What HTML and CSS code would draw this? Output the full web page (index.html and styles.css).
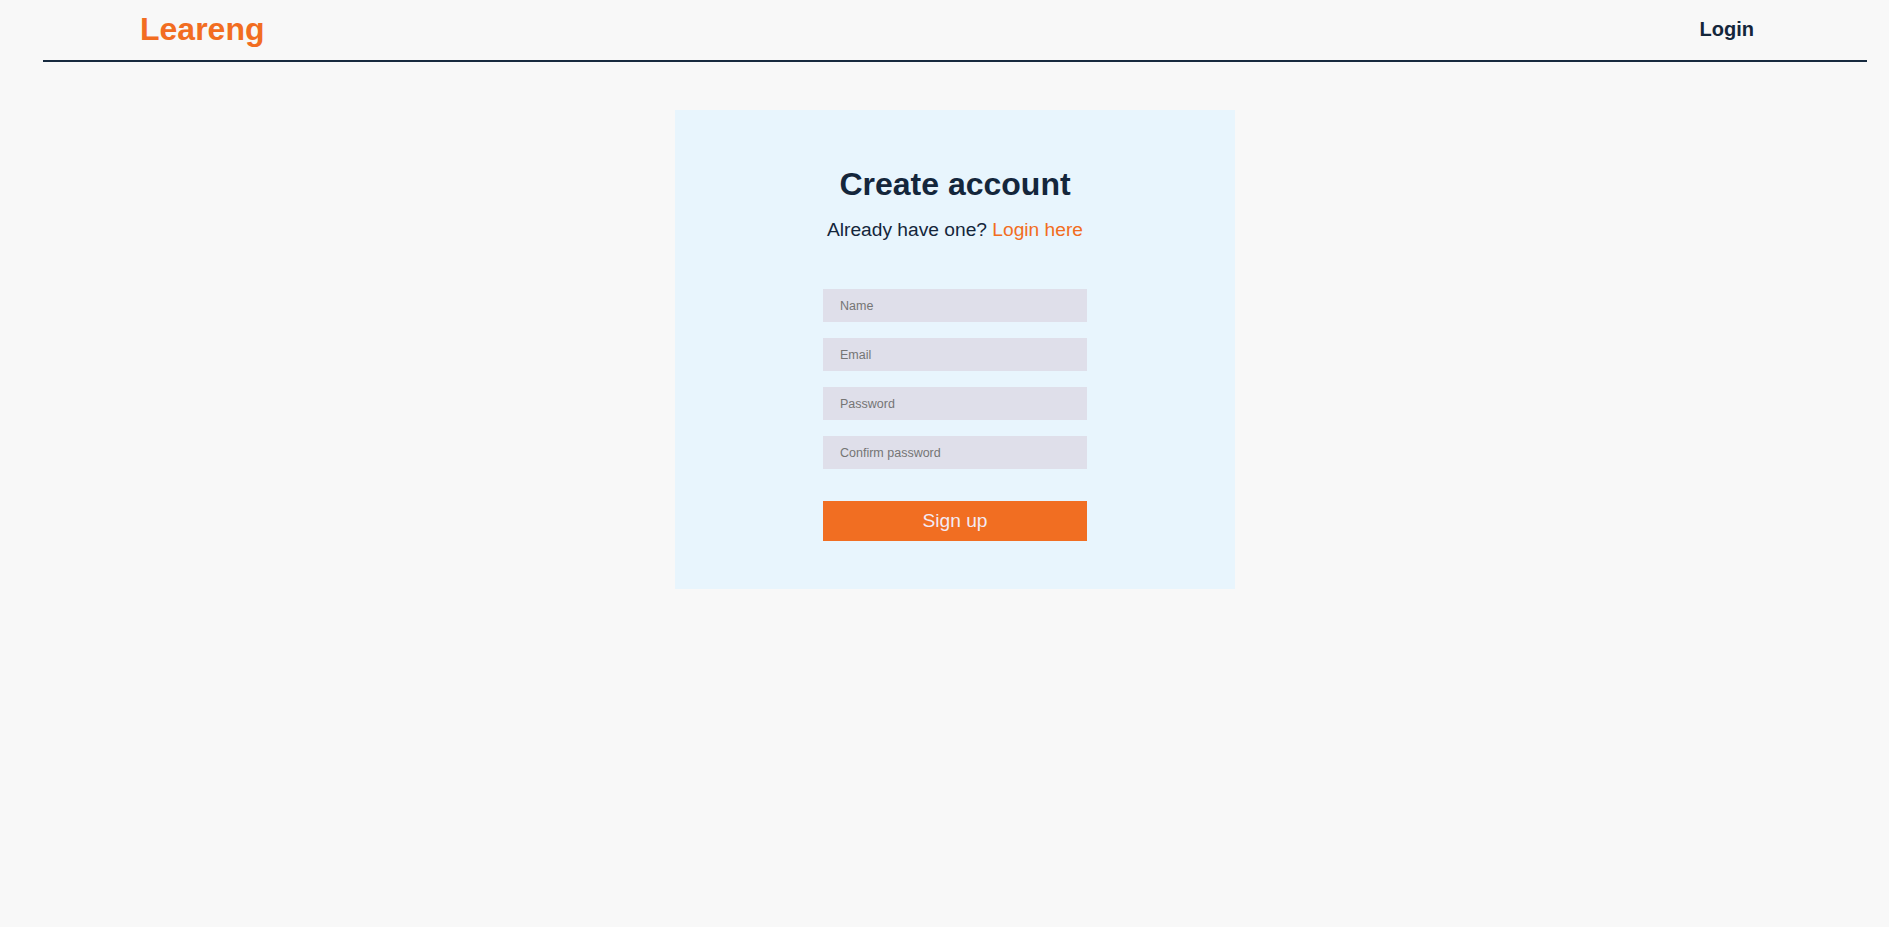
FILE: index.html
```html
<!DOCTYPE html>
<html lang="en">
<head>
<meta charset="utf-8">
<title>Leareng - Create account</title>
<link rel="stylesheet" href="styles.css">
</head>
<body>
<div class="page">
  <header class="topbar">
    <a class="logo" href="#">Leareng</a>
    <a class="nav-login" href="#">Login</a>
  </header>
  <main class="main">
    <section class="card">
      <h1 class="title">Create account</h1>
      <p class="subtitle">Already have one? <a href="#" class="link">Login here</a></p>
      <form class="form">
        <input class="field" type="text" placeholder="Name">
        <input class="field" type="email" placeholder="Email">
        <input class="field" type="password" placeholder="Password">
        <input class="field" type="password" placeholder="Confirm password">
        <button class="btn" type="button">Sign up</button>
      </form>
    </section>
  </main>
</div>
</body>
</html>
```
FILE: styles.css
```css
html, body {
  margin: 0;
  padding: 0;
  background: #f8f8f8;
  font-family: "Liberation Sans", Arial, sans-serif;
  color: #14263b;
}

.page {
  margin: 0 22px 0 43px;
}

.topbar {
  display: flex;
  justify-content: space-between;
  align-items: flex-start;
  height: 60px;
  border-bottom: 2px solid #172a3f;
  padding: 0 113px 0 97px;
}

.logo {
  margin-top: 13px;
  font-size: 32px;
  line-height: 32px;
  font-weight: 700;
  color: #f26d21;
  text-decoration: none;
}

.nav-login {
  margin-top: 19px;
  font-size: 20px;
  line-height: 20px;
  font-weight: 700;
  color: #14263b;
  text-decoration: none;
}

.main {
  display: flex;
  justify-content: center;
  padding-top: 48px;
}

.card {
  width: 560px;
  box-sizing: border-box;
  background: #e8f5fd;
  padding: 56px 0 48px;
  display: flex;
  flex-direction: column;
  align-items: center;
}

.title {
  margin: 0 0 16px;
  font-size: 32px;
  line-height: 37px;
  font-weight: 700;
  color: #14263b;
}

.subtitle {
  margin: 0 0 48px;
  font-size: 19.2px;
  line-height: 22px;
  color: #14263b;
}

.link {
  color: #f26d21;
  text-decoration: none;
}

.form {
  width: 264px;
  display: flex;
  flex-direction: column;
  gap: 16px;
}

.field {
  height: 33px;
  box-sizing: border-box;
  border: none;
  outline: none;
  background: #dfdfea;
  padding: 0 17px;
  font-family: "Liberation Sans", Arial, sans-serif;
  font-size: 12.5px;
  color: #333;
}

.field::placeholder {
  color: #757575;
}

.btn {
  margin-top: 16px;
  height: 40px;
  border: none;
  background: #f16e22;
  color: #f3eaf4;
  font-family: "Liberation Sans", Arial, sans-serif;
  font-size: 19.2px;
  cursor: pointer;
}
```
